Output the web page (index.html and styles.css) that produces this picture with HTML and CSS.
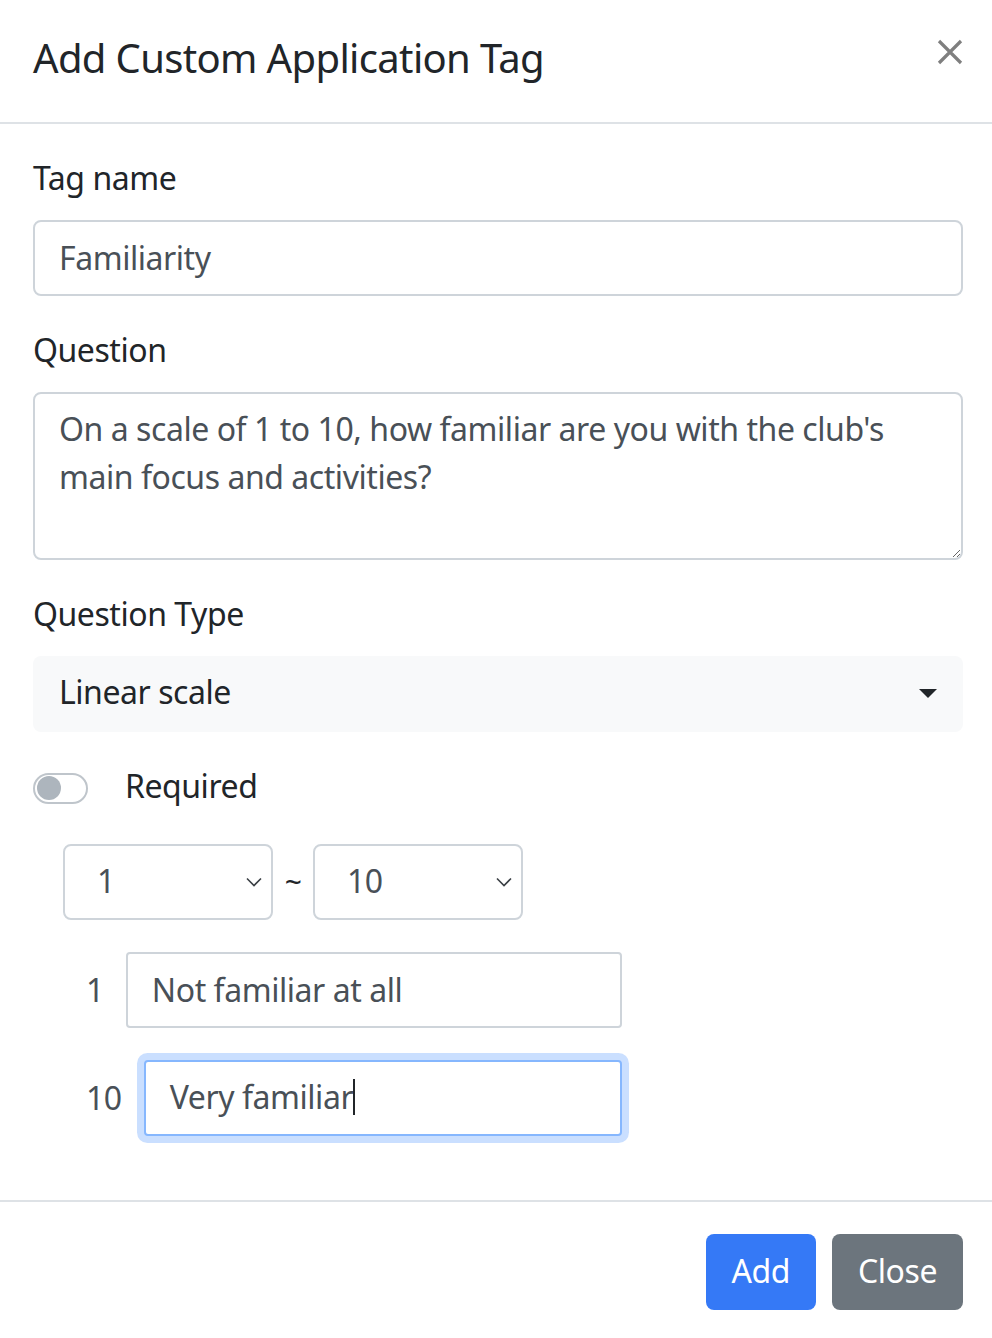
FILE: index.html
```html
<!DOCTYPE html>
<html lang="en">
<head>
<meta charset="utf-8">
<title>Add Custom Application Tag</title>
<link rel="stylesheet" href="styles.css">
</head>
<body>
<div class="modal">
  <div class="modal-header">
    <h1 class="modal-title">Add Custom Application Tag</h1>
    <button class="btn-close" aria-label="Close">
      <svg width="26" height="26" viewBox="0 0 26 26"><path d="M2 2 L24 24 M24 2 L2 24" stroke="#7f7f7f" stroke-width="3.2" fill="none"/></svg>
    </button>
  </div>
  <div class="modal-body">
    <div class="field">
      <label class="label">Tag name</label>
      <input class="control" type="text" value="Familiarity">
    </div>
    <div class="field">
      <label class="label">Question</label>
      <textarea class="control textarea">On a scale of 1 to 10, how familiar are you with the club's main focus and activities?</textarea>
    </div>
    <div class="field">
      <label class="label">Question Type</label>
      <div class="type-select">
        <span>Linear scale</span>
        <svg class="caret" width="18" height="10" viewBox="0 0 18 10"><path d="M0 0 H18 L9 9 Z" fill="#212529"/></svg>
      </div>
    </div>
    <div class="field switch-row">
      <span class="switch"><span class="knob"></span></span>
      <span class="switch-label">Required</span>
    </div>
    <div class="field range-row">
      <div class="small-select">
        <span>1</span>
        <svg width="16" height="10" viewBox="0 0 16 10"><path d="M1 1.5 L8 8.5 L15 1.5" stroke="#3a3f44" stroke-width="1.6" fill="none"/></svg>
      </div>
      <span class="tilde">~</span>
      <div class="small-select">
        <span>10</span>
        <svg width="16" height="10" viewBox="0 0 16 10"><path d="M1 1.5 L8 8.5 L15 1.5" stroke="#3a3f44" stroke-width="1.6" fill="none"/></svg>
      </div>
    </div>
    <div class="field scale-row">
      <span class="scale-num">1</span>
      <input class="control plain" type="text" value="Not familiar at all">
    </div>
    <div class="field scale-row">
      <span class="scale-num">10</span>
      <div class="control plain focused">Very familiar<span class="text-caret"></span></div>
    </div>
  </div>
  <div class="modal-footer">
    <button class="btn btn-primary">Add</button>
    <button class="btn btn-secondary">Close</button>
  </div>
</div>
</body>
</html>
```
FILE: styles.css
```css
* { box-sizing: border-box; }
html, body { margin: 0; padding: 0; background: #fff; }
body {
  font-family: "Noto Sans", "Noto Sans CJK KR", sans-serif;
  font-size: 32px;
  line-height: 48px;
  letter-spacing: -0.45px;
  color: #212529;
  width: 992px;
  height: 1338px;
  overflow: hidden;
}
.modal { width: 992px; background: #fff; }
.modal-header {
  display: flex;
  align-items: flex-start;
  justify-content: space-between;
  padding: 29px 29px 35px 33px;
  border-bottom: 2px solid #dee2e6;
  height: 124px;
}
.modal-title {
  margin: 0;
  font-size: 40px;
  line-height: 58px;
  font-weight: 400;
  letter-spacing: -0.65px;
  color: #212529;
}
.btn-close {
  border: 0;
  background: transparent;
  padding: 0;
  margin-top: 10px;
  width: 26px;
  height: 26px;
  display: flex;
}
.modal-body { padding: 32px 29px 32px 33px; }
.field { margin-bottom: 32px; }
.label { display: block; margin-bottom: 16px; line-height: 48px; position: relative; top: -2px; }
.control {
  display: block;
  width: 100%;
  min-width: 0;
  height: 76px;
  padding: 11px 24px 13px;
  font-family: inherit;
  font-size: 32px;
  line-height: 48px;
  letter-spacing: -0.45px;
  color: #495057;
  background: #fff;
  border: 2px solid #ced4da;
  border-radius: 8px;
  outline: none;
}
.textarea { height: 168px; resize: vertical; }
.type-select {
  height: 76px;
  background: #f8f9fa;
  border-radius: 8px;
  padding: 10px 26px 14px 26px;
  display: flex;
  align-items: center;
  justify-content: space-between;
  color: #212529;
}
.caret { margin-top: 4px; }
.switch-row { display: flex; align-items: center; gap: 37px; height: 48px; }
.switch {
  width: 55px;
  height: 31px;
  border: 2px solid #bfc5cb;
  border-radius: 16px;
  background: #fff;
  display: flex;
  align-items: center;
  padding-left: 2px;
}
.knob { width: 24px; height: 24px; border-radius: 50%; background: #adb5bd; }
.switch-label { position: relative; top: -2px; }
.range-row { display: flex; align-items: center; padding-left: 30px; }
.small-select {
  width: 210px;
  height: 76px;
  border: 2px solid #ced4da;
  border-radius: 8px;
  display: flex;
  align-items: center;
  justify-content: space-between;
  padding: 0 9px 2px 32px;
  color: #495057;
}
.small-select svg { margin-top: 2px; }
.tilde { width: 40px; text-align: center; color: #212529; font-size: 30px; }
.scale-row { display: flex; align-items: center; margin-left: 53px; width: 536px; }
.scale-num { color: #495057; margin-right: 22px; }
.plain { border-radius: 4px; flex: 1; width: auto; }
.focused {
  border-color: #86b7fe;
  box-shadow: 0 0 0 7px rgba(13, 110, 253, 0.22);
  color: #495057;
  display: flex;
  align-items: center;
}
.text-caret { display: inline-block; width: 2px; height: 36px; background: #212529; margin-left: 0; }
.modal-footer {
  border-top: 2px solid #dee2e6;
  display: flex;
  justify-content: flex-end;
  gap: 16px;
  padding: 32px 29px 24px 24px;
}
.btn {
  height: 76px;
  padding: 0 26px 3px;
  border: 0;
  border-radius: 8px;
  color: #fff;
  font-family: inherit;
  font-size: 32px;
  line-height: 48px;
  letter-spacing: -0.45px;
}
.btn-primary { background: #3579f6; }
.btn-secondary { background: #6c757d; }
```
